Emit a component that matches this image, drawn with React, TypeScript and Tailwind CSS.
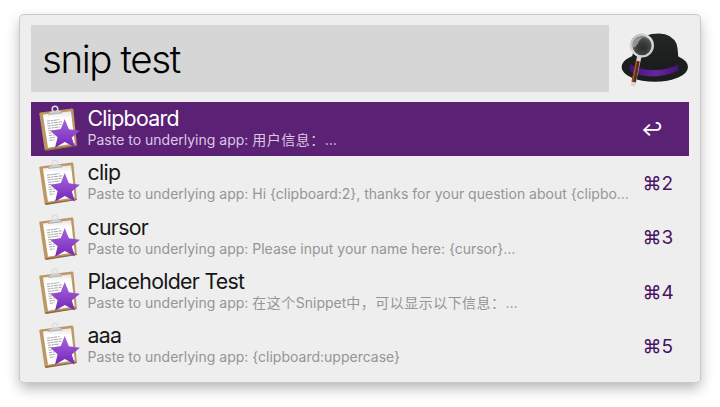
const rows = [
  { title: "Clipboard", detail: "用户信息：…", key: "↩" },
  { title: "clip", detail: "Hi {clipboard:2}, thanks for your question about {clipbo…", key: "⌘2" },
  { title: "cursor", detail: "Please input your name here: {cursor}…", key: "⌘3" },
  { title: "Placeholder Test", detail: "在这个Snippet中，可以显示以下信息：…", key: "⌘4" },
  { title: "aaa", detail: "{clipboard:uppercase}", key: "⌘5" },
];

function SnippetIcon() {
  return (
    <svg className="block h-[48px] w-[46px] shrink-0" viewBox="-1 0 46 48">
      <defs>
        <linearGradient id="star" x1="0" y1="0" x2="0" y2="1">
          <stop offset="0" stopColor="#a866dd" />
          <stop offset="1" stopColor="#7426b8" />
        </linearGradient>
        <linearGradient id="paper" x1="0" y1="0" x2="0" y2="1">
          <stop offset="0" stopColor="#e4e4e4" />
          <stop offset="0.2" stopColor="#ffffff" />
        </linearGradient>
      </defs>
      <path d="M0.3 8.4 L32 4.6 Q33.2 4.6 33.4 5.8 L36.9 41.6 L6 46.4 Q4.8 46.5 4.6 45.4 L-0.7 9.6 Q-0.8 8.6 0.3 8.4 Z" fill="#bd9765" />
      <path d="M4.6 45.6 L36.8 41 L36.9 42 L6 46.9 Z" fill="#8c6a43" />
      <path d="M2.9 10.6 L31 7.2 L34.7 39.2 L8 43.7 Z" fill="url(#paper)" />
      <g stroke="#8d8d90" strokeWidth="0.8" strokeDasharray="3.2 0.7 2.2 0.6 4 0.8">
        <path d="M6.8 17.2 L19.5 15.6" />
        <path d="M7.2 19.6 L22.5 17.7" />
        <path d="M7.5 22 L21.5 20.3" />
        <path d="M7.9 24.4 L20 22.9" />
        <path d="M8.2 26.8 L13 26.2" />
        <path d="M8.6 29.2 L16 28.3" />
        <path d="M8.9 31.6 L17 30.6" />
        <path d="M9.3 34 L15 33.3" />
        <path d="M9.7 36.4 L14.5 35.8" />
      </g>
      <circle cx="15" cy="5" r="2.8" fill="none" stroke="#dededf" strokeWidth="1.5" />
      <path d="M8.6 10.2 Q9 8 11.4 7.5 L18.6 6.6 Q21 6.5 22 8.6 Z" fill="#cfcfd0" />
      <path d="M8.4 10.5 L22.2 8.8" stroke="#a2a2a5" strokeWidth="0.8" />
      <path
        d="M24.7 15 L28.9 25.3 L39.9 26.7 L31.8 33.5 L35 43.4 L24.8 38 L15 43.8 L17.6 33.3 L10.4 26.7 L20.8 25.1 Z"
        fill="url(#star)"
      />
    </svg>
  );
}

function HatIcon() {
  return (
    <svg className="block h-[60px] w-[70px]" viewBox="0 0 70 60">
      <defs>
        <linearGradient id="felt" x1="0" y1="0" x2="0" y2="1">
          <stop offset="0" stopColor="#232625" />
          <stop offset="1" stopColor="#191b1a" />
        </linearGradient>
        <linearGradient id="band" x1="0" y1="0" x2="1" y2="0">
          <stop offset="0" stopColor="#43127a" />
          <stop offset="0.55" stopColor="#67269c" />
          <stop offset="1" stopColor="#43127a" />
        </linearGradient>
        <radialGradient id="lens" cx="0.55" cy="0.6" r="0.6">
          <stop offset="0" stopColor="#292b2b" />
          <stop offset="0.6" stopColor="#454747" />
          <stop offset="1" stopColor="#858787" />
        </radialGradient>
        <linearGradient id="rim" x1="0" y1="0" x2="1" y2="1">
          <stop offset="0" stopColor="#b4b6b6" />
          <stop offset="0.5" stopColor="#dedede" />
          <stop offset="1" stopColor="#c4c6c6" />
        </linearGradient>
      </defs>
      <ellipse cx="35.8" cy="39" rx="33.2" ry="14.8" fill="#1c1e1d" />
      <path d="M11 38 Q13 27 17 15 Q24 5.4 40 5.4 Q53 5.6 57.6 16 Q59.4 22 59.4 38 Q50 46 34 46 Q20 46 11 40 Z" fill="url(#felt)" />
      <path d="M10.6 36 Q21 42 34 42 Q49 42 59.2 36.4 L59.2 42.6 Q48 48.4 34 48.4 Q20 48.2 10.8 43 Z" fill="url(#band)" />
      <path d="M20.4 28 L13.9 58" stroke="#d9d3ce" strokeWidth="4.4" />
      <path d="M18.6 33 L14.7 54" stroke="#5f2c17" strokeWidth="4.4" />
      <path d="M17.5 33 L13.6 54" stroke="#a3623a" strokeWidth="1.2" />
      <circle cx="23" cy="17.6" r="10.8" fill="url(#lens)" stroke="url(#rim)" strokeWidth="2.4" />
      <path d="M13.6 17 Q15.6 9 24 8.9 Q20 11.5 18.4 16.5 Q16.6 19.5 13.8 19.6 Z" fill="#c8caca" opacity="0.55" />
    </svg>
  );
}

// Han characters sit on a slightly wider pitch than the Latin text around them.
function Detail({ text }: { text: string }) {
  return text.split(/([\u3000-\u9fff\uff00-\uffef]+)/).map((part, i) =>
    i % 2 === 1 ? (
      <span key={i} className="tracking-[0.48px]">
        {part}
      </span>
    ) : (
      part
    ),
  );
}

export default function App() {
  return (
    <div className="h-[407px] w-[720px] overflow-hidden bg-white pt-[15px] pl-[20px] font-['Inter','Noto_Sans_CJK_SC',sans-serif]">
      <div className="h-[367px] w-[680px] rounded-[4px] bg-[#eeeeee] px-[11px] pt-[10px] shadow-[0_0_0_1px_#c8c8c8,0_6px_14px_rgba(0,0,0,0.3)]">
        <div className="flex h-[67px]">
          <div className="flex w-[578px] items-center bg-[#d6d6d6] pt-[1px] pl-[11px]">
            <span className="text-[38.5px] leading-[48px] font-[340] tracking-[-1.4px] whitespace-nowrap text-black">snip test</span>
          </div>
          <div className="pt-[3px] pl-[10px]">
            <HatIcon />
          </div>
        </div>
        <div className="mt-[10px] flex flex-col">
          {rows.map((row, i) => (
            <div
              key={row.title}
              className={`flex h-[54.3px] w-[658px] pl-[8px] ${i === 0 ? "bg-[#5b2175] text-white" : "text-[#161616]"}`}
            >
              <div className="pt-[2px]">
                <SnippetIcon />
              </div>
              <div className="flex w-[550px] flex-col pt-[4px] pl-[2.5px]">
                <span className="h-[25px] text-[21.3px] leading-[25px] tracking-[-0.7px] whitespace-nowrap">{row.title}</span>
                <span
                  className={`h-[18px] text-[14px] leading-[18px] whitespace-nowrap ${i === 0 ? "text-[#dcc8e6]" : "text-[#959595]"}`}
                >
                  Paste to underlying app: <Detail text={row.detail} />
                </span>
              </div>
              <span
                className={`flex items-center pt-[1px] text-[19px] leading-[24px] whitespace-nowrap ${i === 0 ? "pl-[6px] font-medium text-white" : "pl-[7.5px] text-[#481263]"}`}
              >
                {row.key}
              </span>
            </div>
          ))}
        </div>
      </div>
    </div>
  );
}
